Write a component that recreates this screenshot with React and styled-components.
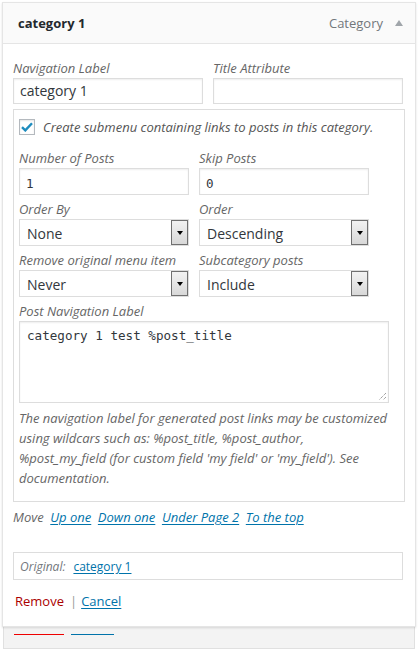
import React from "react";
import styled, { createGlobalStyle } from "styled-components";

const GlobalStyle = createGlobalStyle`
  body {
    margin: 0;
    background: #fff;
    font-family: "Open Sans", "Liberation Sans", sans-serif;
    font-size: 13px;
    color: #444;
  }
`;

const Page = styled.div`
  padding: 2px 3px 0 2px;
  width: 414px;
`;

const Card = styled.div`
  position: relative;
  z-index: 1;
  border: 1px solid #e5e5e5;
  background: #fff;
  box-shadow: 0 1px 2px rgba(0, 0, 0, 0.12);
`;

const Header = styled.div`
  height: 40px;
  display: flex;
  align-items: center;
  padding: 0 10px 0 15px;
  background: #fafafa;
  border-bottom: 1px solid #e5e5e5;
`;

const Title = styled.div`
  flex: 1;
  font-weight: 700;
  font-size: 13px;
  color: #23282d;
`;

const Type = styled.span`
  color: #72777c;
  font-size: 13px;
  margin-right: 12px;
`;

const Arrow = styled.span`
  width: 0;
  height: 0;
  border-left: 4px solid transparent;
  border-right: 4px solid transparent;
  border-bottom: 6px solid #a0a5aa;
  margin-right: 2px;
`;

const Body = styled.div`
  padding: 15px 10px 15px 10px;
`;

const Row = styled.div`
  display: flex;
  gap: 10px;
`;

const Field = styled.div`
  display: flex;
  flex-direction: column;
  width: ${(p) => p.$w}px;
`;

const Label = styled.label`
  font-style: italic;
  color: #666;
  line-height: 18px;
  height: 18px;
  margin-bottom: 1px;
  white-space: nowrap;
`;

const Input = styled.div`
  box-sizing: border-box;
  height: ${(p) => p.$h || 26}px;
  border: 1px solid #ddd;
  box-shadow: inset 0 1px 2px rgba(0, 0, 0, 0.07);
  background: #fff;
  padding: ${(p) => (p.$mono ? "6px 6px 0" : "3px 6px 0")};
  font-family: ${(p) =>
    p.$mono ? '"DejaVu Sans Mono", "Liberation Mono", monospace' : "inherit"};
  font-size: ${(p) => (p.$mono ? "12.6px" : "14px")};
  line-height: 18px;
  color: #32373c;
`;

const Fieldset = styled.div`
  margin-top: 5px;
  width: 392px;
  box-sizing: border-box;
  border: 1px solid #ddd;
  padding: 8px 5px 13px 5px;
  display: flex;
  flex-direction: column;
`;

const CheckRow = styled.div`
  display: flex;
  align-items: center;
  gap: 8px;
  font-style: italic;
  color: #555;
  margin-bottom: 13px;
`;

const Checkbox = styled.span`
  box-sizing: border-box;
  width: 16px;
  height: 16px;
  border: 1px solid #b4b9be;
  box-shadow: inset 0 1px 2px rgba(0, 0, 0, 0.1);
  display: flex;
  align-items: center;
  justify-content: center;
`;

const Stack = styled.div`
  display: flex;
  flex-direction: column;
  gap: 5px;
`;

const SelectBox = styled.div`
  box-sizing: border-box;
  height: 27px;
  border: 1px solid #ddd;
  background: #fff;
  display: flex;
  align-items: stretch;
  font-size: 14px;
  color: #32373c;
`;

const SelectValue = styled.span`
  flex: 1;
  padding: 1px 0 0 7px;
  line-height: 25px;
`;

const SelectButton = styled.span`
  box-sizing: border-box;
  width: 17px;
  border: 1px solid #707070;
  background: linear-gradient(#f2f2f2, #d8d8d8);
  display: flex;
  align-items: center;
  justify-content: center;
  &::after {
    content: "";
    border-left: 3px solid transparent;
    border-right: 3px solid transparent;
    border-top: 4px solid #000;
  }
`;

const TextArea = styled(Input)`
  width: 370px;
  height: 82px;
  position: relative;
  padding: 5px 7px;
  font-size: 12.6px;
`;

const Grip = styled.svg`
  position: absolute;
  right: 1px;
  bottom: 1px;
`;

const Help = styled.p`
  margin: 5px 0 0;
  font-style: italic;
  color: #666;
  line-height: 20px;
  width: 375px;
`;

const MoveLine = styled.div`
  margin-top: 5px;
  font-style: italic;
  color: #666;
  line-height: 20px;
  display: flex;
  gap: 6.6px;
`;

const Link = styled.a`
  color: #0073aa;
  text-decoration: underline;
  text-underline-offset: 2px;
`;

const Original = styled.div`
  margin-top: 25px;
  width: 390px;
  box-sizing: border-box;
  height: 28px;
  border: 1px solid #ddd;
  padding: 0 6px;
  display: flex;
  align-items: center;
  gap: 8px;
  font-size: 12px;
`;

const OrigLabel = styled.span`
  font-style: italic;
  color: #72777c;
`;

const Actions = styled.div`
  margin-top: 11px;
  padding-left: 2px;
  display: flex;
  align-items: center;
  gap: 4px;
  font-size: 13px;
  line-height: 20px;
`;

const Remove = styled.span`
  color: #a00;
  margin-right: 2px;
`;

const Sep = styled.span`
  color: #999;
`;

const Behind = styled.div`
  margin: 0 0 0 1px;
  height: 22px;
  width: 412px;
  box-sizing: border-box;
  background: #f3f3f3;
  border: 1px solid #e0e0e0;
  border-top: none;
  display: flex;
  gap: 7px;
  padding: 7px 0 0 10px;
`;

const Line = styled.span`
  height: 1px;
  width: ${(p) => p.$w}px;
  background: ${(p) => p.$c};
`;

const Select = ({ value, width }) => (
  <SelectBox style={{ width }}>
    <SelectValue>{value}</SelectValue>
    <SelectButton />
  </SelectBox>
);

export default function App() {
  return (
    <>
      <GlobalStyle />
      <Page>
        <Card>
          <Header>
            <Title>category 1</Title>
            <Type>Category</Type>
            <Arrow />
          </Header>
          <Body>
            <Row>
              <Field $w={190}>
                <Label>Navigation Label</Label>
                <Input>category 1</Input>
              </Field>
              <Field $w={190}>
                <Label>Title Attribute</Label>
                <Input />
              </Field>
            </Row>
            <Fieldset>
              <CheckRow>
                <Checkbox>
                  <svg width="12" height="10" viewBox="0 0 12 10">
                    <path d="M1 5.2 L4.3 8.4 L11 1.2" fill="none" stroke="#1e8cbe" strokeWidth="2.4" />
                  </svg>
                </Checkbox>
                Create submenu containing links to posts in this category.
              </CheckRow>
              <Stack>
                <Row>
                  <Field $w={170}>
                    <Label>Number of Posts</Label>
                    <Input $mono $h={27}>1</Input>
                  </Field>
                  <Field $w={170}>
                    <Label>Skip Posts</Label>
                    <Input $mono $h={27}>0</Input>
                  </Field>
                </Row>
                <Row>
                  <Field $w={170}>
                    <Label>Order By</Label>
                    <Select value="None" width={170} />
                  </Field>
                  <Field $w={170}>
                    <Label>Order</Label>
                    <Select value="Descending" width={170} />
                  </Field>
                </Row>
                <Row>
                  <Field $w={170}>
                    <Label>Remove original menu item</Label>
                    <Select value="Never" width={170} />
                  </Field>
                  <Field $w={170}>
                    <Label>Subcategory posts</Label>
                    <Select value="Include" width={170} />
                  </Field>
                </Row>
                <Field $w={370}>
                  <Label>Post Navigation Label</Label>
                  <TextArea $mono>
                    category 1 test %post_title
                    <Grip width="9" height="9" viewBox="0 0 9 9">
                      <path d="M8 1 L1 8 M8 5 L5 8" stroke="#777" strokeWidth="1" strokeDasharray="1 1" />
                    </Grip>
                  </TextArea>
                </Field>
              </Stack>
              <Help>
                The navigation label for generated post links may be customized
                using wildcars such as: %post_title, %post_author,
                %post_my_field (for custom field 'my field' or 'my_field'). See
                documentation.
              </Help>
            </Fieldset>
            <MoveLine>
              <span>Move</span>
              <Link>Up one</Link>
              <Link>Down one</Link>
              <Link>Under Page 2</Link>
              <Link>To the top</Link>
            </MoveLine>
            <Original>
              <OrigLabel>Original:</OrigLabel>
              <Link>category 1</Link>
            </Original>
            <Actions>
              <Remove>Remove</Remove>
              <Sep>|</Sep>
              <Link>Cancel</Link>
            </Actions>
          </Body>
        </Card>
        <Behind>
          <Line $w={50} $c="#e00" />
          <Line $w={43} $c="#0073aa" />
        </Behind>
      </Page>
    </>
  );
}
